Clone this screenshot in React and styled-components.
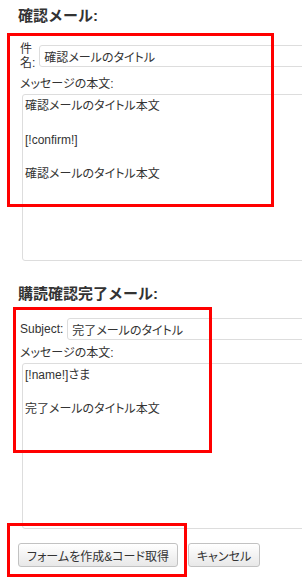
import React from 'react'
import styled, { createGlobalStyle } from 'styled-components'

const GlobalStyle = createGlobalStyle`
    html, body {
        margin: 0;
        padding: 0;
        background: #fff;
        overflow: hidden;
    }
    body {
        font-family: "Liberation Sans", "Noto Sans CJK JP", sans-serif;
        font-size: 12px;
        color: #333;
        font-feature-settings: "palt";
    }
`;

const Page = styled.div`
    position: relative;
    width: 302px;
    height: 585px;
    overflow: hidden;
    padding: 7px 0 0 18px;
    box-sizing: border-box;
`;

const Section = styled.section`
    margin-top: ${p => p.$top || 0}px;
`;

const Heading = styled.h3`
    margin: 0 0 ${p => p.$gap}px 0;
    font-size: 15px;
    line-height: 18px;
    font-weight: bold;
    color: #333;
    font-feature-settings: normal;
`;

const Row = styled.div`
    display: flex;
    align-items: center;
    gap: 4px;
    padding-left: 2px;
`;

const Label = styled.label`
    flex: 0 0 auto;
    width: min-content;
    line-height: 14px;
`;

const Input = styled.input`
    flex: 0 0 300px;
    height: 22px;
    box-sizing: border-box;
    border: 1px solid #ddd;
    border-radius: 3px;
    padding: 0 4px;
    font: inherit;
    color: #333;
    outline: none;
    background: #fff;
`;

const BodyLabel = styled.div`
    margin-top: ${p => p.$gap}px;
    padding-left: 2px;
    line-height: 14px;
`;

const Body = styled.textarea`
    display: block;
    margin: 3px 0 0 4px;
    width: 320px;
    height: ${p => p.$h}px;
    box-sizing: border-box;
    border: 1px solid #ddd;
    border-radius: 3px;
    padding: 3px 2px;
    font: inherit;
    line-height: 17px;
    color: #333;
    resize: none;
    outline: none;
    overflow: hidden;
    background: #fff;
`;

const Buttons = styled.div`
    display: flex;
    gap: 10px;
    margin-top: 14px;
`;

const Button = styled.button`
    height: 24px;
    padding: 0 8px;
    border: 1px solid #c2c2c2;
    border-radius: 3px;
    background: linear-gradient(#ffffff, #e8e8e8);
    font: inherit;
    color: #333;
    cursor: pointer;
`;

const Mark = styled.div`
    position: absolute;
    left: ${p => p.$x}px;
    top: ${p => p.$y}px;
    width: ${p => p.$w}px;
    height: ${p => p.$h}px;
    border: 3px solid #ff0000;
    box-sizing: border-box;
    pointer-events: none;
`;

const MailBlock = ({ title, label, subject, body, top, headGap, bodyGap, bodyH }) => (
    <Section $top={top}>
        <Heading $gap={headGap}>{title}</Heading>
        <Row>
            <Label>{label}</Label>
            <Input defaultValue={subject} />
        </Row>
        <BodyLabel $gap={bodyGap}>メッセージの本文:</BodyLabel>
        <Body $h={bodyH} readOnly value={body} />
    </Section>
)

const App = () => {
    return (
        <>
            <GlobalStyle />
            <Page>
                <MailBlock
                    title="確認メール:"
                    label="件名:"
                    subject="確認メールのタイトル"
                    body={'確認メールのタイトル本文\n\n[!confirm!]\n\n確認メールのタイトル本文'}
                    headGap={17}
                    bodyGap={7}
                    bodyH={167}
                />
                <MailBlock
                    title="購読確認完了メール:"
                    label="Subject:"
                    subject="完了メールのタイトル"
                    body={'[!name!]さま\n\n完了メールのタイトル本文'}
                    top={24}
                    headGap={15}
                    bodyGap={6}
                    bodyH={166}
                />
                <Buttons>
                    <Button>フォームを作成&amp;コード取得</Button>
                    <Button>キャンセル</Button>
                </Buttons>

                <Mark $x={7} $y={33} $w={267} $h={174} />
                <Mark $x={13} $y={307} $w={199} $h={146} />
                <Mark $x={7} $y={523} $w={180} $h={54} />
            </Page>
        </>
    )
}

export default App
